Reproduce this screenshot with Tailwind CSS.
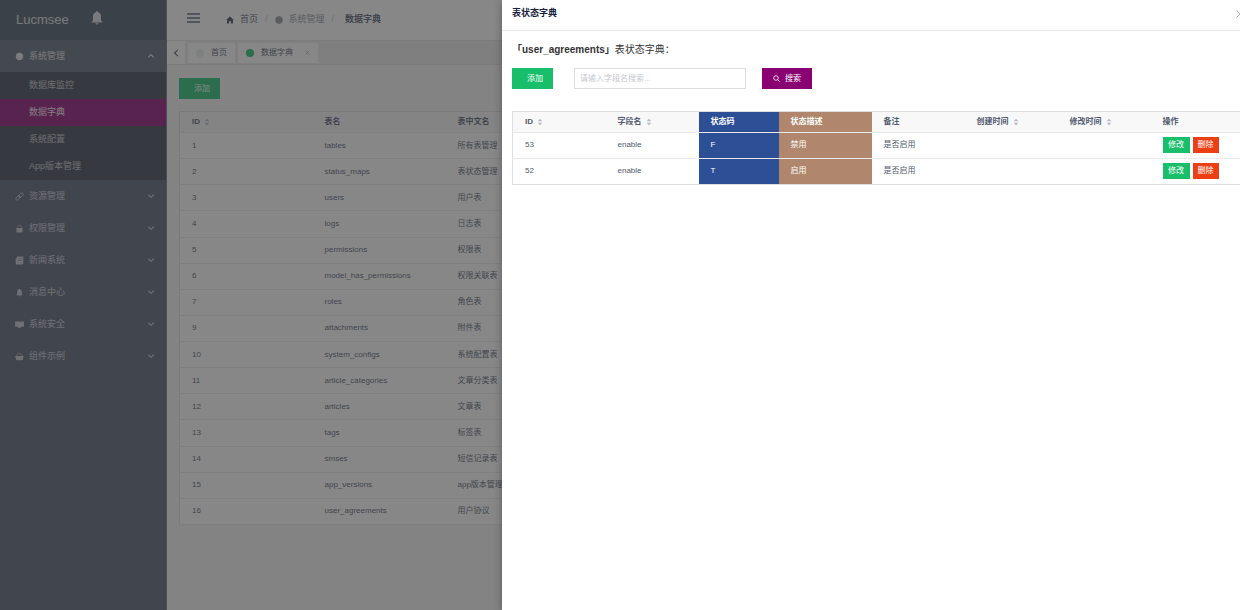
<!DOCTYPE html>
<html lang="zh-CN">
<head>
<meta charset="utf-8">
<meta name="viewport" content="width=device-width, initial-scale=1">
<title>数据字典 - Lucmsee</title>
<script src="https://cdn.jsdelivr.net/npm/@tailwindcss/browser@4"></script>
</head>
<body class="relative flex h-screen overflow-hidden bg-[#f5f5f5] font-['Liberation_Sans','Noto_Sans_CJK_SC',sans-serif] text-[8px] text-[#515a6e]">

<svg class="hidden" aria-hidden="true">
  <symbol id="sort" viewBox="0 0 6 8"><path d="M3 .8 5.3 3.3H.7zM3 7.2.7 4.7h4.6z" fill="#b4b8c2"/></symbol>
  <symbol id="down" viewBox="0 0 8 8"><path d="M1.2 2.6 4 5.4l2.8-2.8" fill="none" stroke="currentColor" stroke-width="1.1"/></symbol>
  <symbol id="up" viewBox="0 0 8 8"><path d="M1.2 5.4 4 2.6l2.8 2.8" fill="none" stroke="currentColor" stroke-width="1.1"/></symbol>
</svg>

<!-- Sidebar -->
<aside class="flex w-[167px] shrink-0 flex-col border-r border-[#6a7182] bg-[#515a6e] text-[9px] text-white/65">
  <div class="flex h-10 shrink-0 items-center bg-[#435262] pl-4">
    <span class="text-[13px] text-white/80">Lucmsee</span>
    <button type="button" aria-label="通知" class="ml-[22px] pb-1 text-white/80">
      <svg class="h-4 w-3" viewBox="0 0 12 16" fill="currentColor"><path d="M6 1.2c.7 0 1.1.5 1.1 1.1 1.9.5 2.9 2.200 2.900 4.200v3.200c0 1 .6 1.500 1.500 2.300v.6H.5V12C1.400 11.200 2 10.700 2 9.700V6.500c0-2 1-3.700 2.900-4.200 0-.6.400-1.100 1.100-1.100zM4.400 13.200h3.200c-.1.900-.8 1.400-1.600 1.400s-1.500-.5-1.600-1.400z"/></svg>
    </button>
  </div>
  <nav>
    <button type="button" class="flex h-8 w-full items-center bg-[#596273] pr-[11px] pl-[15px] text-white/80">
      <svg class="h-[9px] w-[9px]" viewBox="0 0 9 9"><circle cx="4.500" cy="4.500" r="3.700" fill="currentColor"/></svg>
      <span class="ml-[5px] flex-1 pt-0.5 text-left">系统管理</span>
      <svg class="h-2 w-2"><use href="#up"/></svg>
    </button>
    <div class="flex flex-col bg-[#363e4f]">
      <a href="#" class="flex h-[27px] items-center pt-px pl-[29px]">数据库监控</a>
      <a href="#" class="flex h-[27px] items-center bg-[#8c0776] pt-px pl-[29px] text-white/90">数据字典</a>
      <a href="#" class="flex h-[27px] items-center pt-px pl-[29px]">系统配置</a>
      <a href="#" class="flex h-[27px] items-center pt-px pl-[29px]">App版本管理</a>
    </div>
    <button type="button" class="flex h-8 w-full items-center pr-[11px] pl-[15px]">
      <svg class="h-[9px] w-[9px]" viewBox="0 0 9 9" fill="none" stroke="currentColor" stroke-width=".8"><rect x="3.500" y="1.700" width="5" height="2.800" rx="1.400" transform="rotate(-45 6 3.100)"/><rect x=".5" y="4.500" width="5" height="2.800" rx="1.400" transform="rotate(-45 3 5.900)"/></svg>
      <span class="ml-[5px] flex-1 pt-0.5 text-left">资源管理</span>
      <svg class="h-2 w-2"><use href="#down"/></svg>
    </button>
    <button type="button" class="flex h-8 w-full items-center pr-[11px] pl-[15px]">
      <svg class="h-[9px] w-[9px]" viewBox="0 0 9 9"><path d="M2.800 4V2.800a1.700 1.700 0 0 1 3.400 0V4" fill="none" stroke="currentColor" stroke-width=".6"/><rect x="1.400" y="4" width="6.200" height="4.500" rx=".4" fill="currentColor"/></svg>
      <span class="ml-[5px] flex-1 pt-0.5 text-left">权限管理</span>
      <svg class="h-2 w-2"><use href="#down"/></svg>
    </button>
    <button type="button" class="flex h-8 w-full items-center pr-[11px] pl-[15px]">
      <svg class="h-[9px] w-[9px]" viewBox="0 0 9 9"><path d="M2 .6h6.300v7q0 .8-.8.800H1.500Q.7 8.400.7 7.600V2H2z" fill="currentColor"/><path d="M3 2.800h4.200M3 4.400h4.200" stroke="#6a7182" stroke-width=".5"/></svg>
      <span class="ml-[5px] flex-1 pt-0.5 text-left">新闻系统</span>
      <svg class="h-2 w-2"><use href="#down"/></svg>
    </button>
    <button type="button" class="flex h-8 w-full items-center pr-[11px] pl-[15px]">
      <svg class="h-[9px] w-[9px]" viewBox="0 0 12 16" fill="currentColor"><path d="M6 1.500c.7 0 1.100.5 1.100 1.100C9 3.100 10 4.800 10 6.800V10c0 1 .6 1.500 1.500 2.300v.6H.5v-.6C1.400 11.500 2 11 2 10V6.800c0-2 1-3.700 2.900-4.200C4.900 2 5.300 1.500 6 1.500zM4.400 13.500h3.200c-.1.900-.8 1.400-1.600 1.400s-1.500-.5-1.600-1.400z"/></svg>
      <span class="ml-[5px] flex-1 pt-0.5 text-left">消息中心</span>
      <svg class="h-2 w-2"><use href="#down"/></svg>
    </button>
    <button type="button" class="flex h-8 w-full items-center pr-[11px] pl-[15px]">
      <svg class="h-[9px] w-[9px]" viewBox="0 0 9 9" fill="currentColor"><path d="M.1 1.500h8.800v5.300H5.900l.4.900H2.700l.4-.9h-3z"/></svg>
      <span class="ml-[5px] flex-1 pt-0.5 text-left">系统安全</span>
      <svg class="h-2 w-2"><use href="#down"/></svg>
    </button>
    <button type="button" class="flex h-8 w-full items-center pr-[11px] pl-[15px]">
      <svg class="h-[9px] w-[9px]" viewBox="0 0 9 9"><path d="M1.600 4q0-2.600 2.900-2.600T7.400 4" fill="none" stroke="currentColor" stroke-width=".6"/><path d="M.3 4h8.400v1.200h-.4L7.600 8.300H1.400L.7 5.200H.3z" fill="currentColor"/></svg>
      <span class="ml-[5px] flex-1 pt-0.5 text-left">组件示例</span>
      <svg class="h-2 w-2"><use href="#down"/></svg>
    </button>
  </nav>
</aside>

<!-- Page -->
<main class="flex min-w-0 flex-1 flex-col">
  <header class="flex h-10 shrink-0 items-center bg-white pl-5 text-[9px]">
    <button type="button" aria-label="折叠菜单" class="pb-1">
      <svg class="h-3 w-[13px]" viewBox="0 0 13 12" stroke="#515a6e" stroke-width="1.300"><path d="M0 2h13M0 6h13M0 10h13"/></svg>
    </button>
    <nav aria-label="面包屑" class="ml-[26px] flex items-center text-[#515a6e]">
      <svg class="h-2 w-2" viewBox="0 0 8 8" fill="#3c4354"><path d="M4 .6 7.800 4H7v3.500H4.900V5H3.100v2.500H1V4H.2z"/></svg>
      <a href="#" class="ml-1.5">首页</a>
      <span class="mx-[7px] text-[#c5c8ce]">/</span>
      <svg class="h-2 w-2" viewBox="0 0 8 8"><circle cx="4" cy="4" r="3.700" fill="#8d93a0"/></svg>
      <a href="#" class="ml-1.5 text-[#8d93a0]">系统管理</a>
      <span class="mr-[11px] ml-[7px] text-[#c5c8ce]">/</span>
      <span class="font-bold">数据字典</span>
    </nav>
  </header>

  <div class="flex h-[25px] shrink-0 items-stretch border-y border-[#e0e0e0] bg-[#ebebeb]">
    <button type="button" aria-label="向左滚动" class="flex w-[18px] items-center justify-center bg-white">
      <svg class="h-2 w-2" viewBox="0 0 8 8" fill="none" stroke="#515a6e" stroke-width="1.200"><path d="M5.800.8 2.600 4l3.200 3.200"/></svg>
    </button>
    <div class="flex items-center gap-[3px] pl-[3px]">
      <a href="#" class="flex h-5 items-center bg-white px-2">
        <svg class="h-2 w-2" viewBox="0 0 8 8"><circle cx="4" cy="4" r="4" fill="#e8eaec"/></svg>
        <span class="ml-[7px] pt-px">首页</span>
      </a>
      <div class="flex h-5 items-center bg-white px-2">
        <svg class="h-2 w-2" viewBox="0 0 8 8"><circle cx="4" cy="4" r="4" fill="#19be6b"/></svg>
        <a href="#" class="ml-[7px] pt-px">数据字典</a>
        <button type="button" aria-label="关闭标签" class="ml-3">
          <svg class="h-[5px] w-[5px]" viewBox="0 0 5 5" stroke="#999" stroke-width=".6"><path d="M.4.4l4.200 4.200M4.600.4.4 4.600"/></svg>
        </button>
      </div>
    </div>
  </div>

  <div class="px-3 pt-[13px]">
    <button type="button" class="flex h-[21px] w-[41px] items-center bg-[#19be6b] pl-[15px] text-white">添加</button>
    <table class="mt-3 h-[414px] w-full table-fixed border-collapse border border-[#dcdee2] bg-white text-left [&_td]:border-b [&_td]:border-[#e8eaec] [&_td]:p-0 [&_td]:pl-3 [&_th]:p-0 [&_th]:pl-3">
      <colgroup><col class="w-[133px]"><col class="w-[133px]"><col></colgroup>
      <thead>
        <tr class="h-[21px] border-b border-[#e8eaec] bg-[#f8f8f9]">
          <th><span class="flex items-center gap-1">ID <svg class="h-2 w-1.5"><use href="#sort"/></svg></span></th>
          <th>表名</th><th>表中文名</th>
        </tr>
      </thead>
      <tbody>
        <tr><td>1</td><td>tables</td><td>所有表管理</td></tr>
        <tr><td>2</td><td>status_maps</td><td>表状态管理</td></tr>
        <tr><td>3</td><td>users</td><td>用户表</td></tr>
        <tr><td>4</td><td>logs</td><td>日志表</td></tr>
        <tr><td>5</td><td>permissions</td><td>权限表</td></tr>
        <tr><td>6</td><td>model_has_permissions</td><td>权限关联表</td></tr>
        <tr><td>7</td><td>roles</td><td>角色表</td></tr>
        <tr><td>9</td><td>attachments</td><td>附件表</td></tr>
        <tr><td>10</td><td>system_configs</td><td>系统配置表</td></tr>
        <tr><td>11</td><td>article_categories</td><td>文章分类表</td></tr>
        <tr><td>12</td><td>articles</td><td>文章表</td></tr>
        <tr><td>13</td><td>tags</td><td>标签表</td></tr>
        <tr><td>14</td><td>smses</td><td>短信记录表</td></tr>
        <tr><td>15</td><td>app_versions</td><td>app版本管理</td></tr>
        <tr><td>16</td><td>user_agreements</td><td>用户协议</td></tr>
      </tbody>
    </table>
  </div>
</main>

<!-- Mask and drawer -->
<div class="absolute inset-0 bg-[#373737]/60"></div>
<section role="dialog" aria-labelledby="drawer-title" class="absolute inset-y-0 right-0 left-[502px] overflow-hidden bg-white shadow-[0_2px_8px_rgba(0,0,0,0.3)]">
  <header class="flex h-[31px] items-center justify-between border-b border-[#e8eaec] pb-0.5 pl-[10px]">
    <h2 id="drawer-title" class="text-[9px] font-bold text-[#17233d]">表状态字典</h2>
    <button type="button" aria-label="关闭" class="-mr-1">
      <svg class="h-2 w-2" viewBox="0 0 8 8" stroke="#999" stroke-width=".8"><path d="M.5.5l7 7M7.500.5l-7 7"/></svg>
    </button>
  </header>
  <div class="pl-[10px]">
    <h3 class="flex h-[37px] items-center pb-px text-[10px] text-[#333]"><span><b>「user_agreements」</b>表状态字典：</span></h3>
    <form class="flex h-[21px] items-stretch">
      <button type="button" class="w-[41px] bg-[#19be6b] pl-[15px] text-left text-white">添加</button>
      <input type="text" aria-label="字段名" placeholder="请输入字段名搜索..." class="ml-[21px] w-[172px] border border-[#dcdee2] px-[5px] placeholder:text-[#c5c8ce]">
      <button type="button" class="ml-4 flex w-[50px] items-center bg-[#880072] pl-[11px] text-white">
        <svg class="h-[7px] w-[7px]" viewBox="0 0 7 7" fill="none" stroke="currentColor" stroke-width=".8"><circle cx="3" cy="3" r="2.300"/><path d="M4.700 4.700l2 2"/></svg>
        <span class="ml-[5px]">搜索</span>
      </button>
    </form>
    <table class="mt-[22px] w-full table-fixed border-collapse border border-r-0 border-[#dcdee2] text-left [&_td]:p-0 [&_td]:pb-0.5 [&_td]:pl-3 [&_th]:p-0 [&_th]:pl-3">
      <colgroup><col class="w-[93px]"><col class="w-[93px]"><col class="w-[80px]"><col class="w-[93px]"><col class="w-[93px]"><col class="w-[93px]"><col class="w-[93px]"><col></colgroup>
      <thead>
        <tr class="h-[21px] border-b border-[#e8eaec] bg-[#f8f8f9]">
          <th><span class="flex items-center gap-1">ID <svg class="h-2 w-1.5"><use href="#sort"/></svg></span></th>
          <th><span class="flex items-center gap-1">字段名 <svg class="h-2 w-1.5"><use href="#sort"/></svg></span></th>
          <th class="bg-[#2d4f96] text-white">状态码</th>
          <th class="bg-[#b0876c] text-white">状态描述</th>
          <th>备注</th>
          <th><span class="flex items-center gap-1">创建时间 <svg class="h-2 w-1.5"><use href="#sort"/></svg></span></th>
          <th><span class="flex items-center gap-1">修改时间 <svg class="h-2 w-1.5"><use href="#sort"/></svg></span></th>
          <th>操作</th>
        </tr>
      </thead>
      <tbody>
        <tr class="h-[26px] border-b border-[#e8eaec]">
          <td>53</td><td>enable</td><td class="bg-[#2d4f96] text-white">F</td><td class="bg-[#b0876c] text-white">禁用</td><td>是否启用</td><td></td><td></td>
          <td><div class="flex gap-[3px] text-white"><button type="button" class="h-4 w-[27px] bg-[#19be6b]">修改</button><button type="button" class="h-4 w-[26px] bg-[#ed3f14]">删除</button></div></td>
        </tr>
        <tr class="h-[26px] border-b border-[#dcdee2]">
          <td>52</td><td>enable</td><td class="bg-[#2d4f96] text-white">T</td><td class="bg-[#b0876c] text-white">启用</td><td>是否启用</td><td></td><td></td>
          <td><div class="flex gap-[3px] text-white"><button type="button" class="h-4 w-[27px] bg-[#19be6b]">修改</button><button type="button" class="h-4 w-[26px] bg-[#ed3f14]">删除</button></div></td>
        </tr>
      </tbody>
    </table>
  </div>
</section>
</body>
</html>
